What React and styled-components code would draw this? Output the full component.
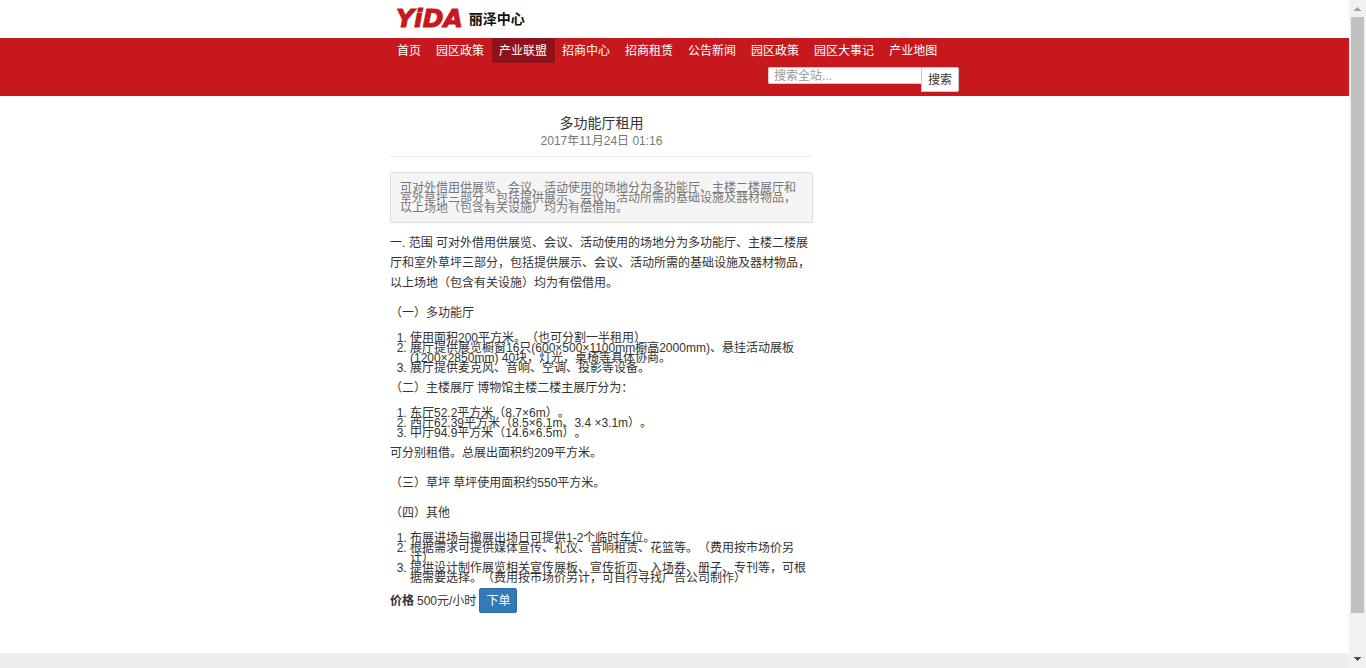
import React from "react";
import styled, { createGlobalStyle } from "styled-components";

const GlobalStyle = createGlobalStyle`
  *, *::before, *::after { box-sizing: border-box; }
  body {
    margin: 0;
    background: #fff;
    color: #333;
    font: 12px/20px "Liberation Sans", "Noto Sans CJK SC", sans-serif;
    text-spacing-trim: space-all;
  }
`;

const Window = styled.div`
  display: grid;
  grid-template-columns: minmax(0, 1fr) 17px;
  min-height: 100vh;
`;

const Page = styled.div`
  display: flex;
  flex-direction: column;
`;

const Container = styled.div`
  width: 100%;
  max-width: 569px;
  margin: 0 auto;
`;

const Brand = styled.a`
  display: flex;
  align-items: center;
  gap: 6px;
  height: 38px;
  padding-left: 6px;
  color: #111;
  text-decoration: none;
`;

const BrandMark = styled.span`
  color: #c7181e;
  font: italic bold 25px/38px "DejaVu Sans", sans-serif;
  -webkit-text-stroke: 1px #c7181e;
`;

const BrandName = styled.span`
  font-size: 14px;
  font-weight: 700;
`;

const Navbar = styled.header`
  background: #c7181e;
`;

const NavList = styled.nav`
  display: flex;
  flex-wrap: wrap;
`;

const NavLink = styled.a`
  padding: 2px 8px 0 7px;
  color: #fff;
  line-height: 23px;
  text-decoration: none;
  white-space: nowrap;
  background: ${(p) => (p.$active ? "#90111a" : "transparent")};
`;

const SearchForm = styled.form`
  display: flex;
  justify-content: flex-end;
  align-items: flex-start;
  padding: 4px 0;
`;

const SearchInput = styled.input`
  width: 153px;
  height: 17px;
  padding: 0 5px;
  border: 1px solid #ccc;
  border-right: 0;
  border-radius: 2px 0 0 2px;
  background: #fff;
  color: #555;
  font: inherit;
  line-height: 15px;
  &::placeholder { color: #999; opacity: 1; }
`;

const Button = styled.button`
  height: 25px;
  padding: 0 6px;
  border: 1px solid ${(p) => (p.$primary ? "#2e6da4" : "#ccc")};
  border-radius: ${(p) => (p.$primary ? "2px" : "0 2px 2px 0")};
  background: ${(p) => (p.$primary ? "#337ab7" : "#fff")};
  color: ${(p) => (p.$primary ? "#fff" : "#333")};
  font: inherit;
  cursor: pointer;
`;

const Article = styled.article`
  max-width: 423px;
  padding: 17px 0 40px;
`;

const ArticleHead = styled.div`
  padding-bottom: 7px;
  margin-bottom: 15px;
  border-bottom: 1px solid #eee;
  text-align: center;
`;

const Title = styled.h1`
  margin: 0;
  font-size: 14px;
  font-weight: 400;
  line-height: 20px;
`;

const PublishedAt = styled.time`
  display: block;
  color: #777;
  line-height: 16px;
`;

const Summary = styled.p`
  margin: 0 0 10px;
  padding: 10px 9px 9px;
  border: 1px solid #ddd;
  border-radius: 2px;
  background: #f5f5f5;
  color: #777;
  line-height: 10px;
`;

const Paragraph = styled.p`
  margin: 0 0 10px;
`;

const NumberedList = styled.ol`
  margin: 0 0 5px;
  padding-left: 20px;
  line-height: 10px;
`;

const PriceRow = styled.div`
  display: flex;
  align-items: center;
  gap: 3px;
`;

const Footer = styled.footer`
  height: 15px;
  margin-top: auto;
  background: #eee;
`;

const ScrollTrack = styled.div`
  display: grid;
  grid-template-rows: 17px 1fr 17px;
  justify-items: center;
  background: #f1f1f1;
`;

const ScrollThumb = styled.div`
  width: 13px;
  height: 94%;
  background: #c1c1c1;
`;

const NAV = ["首页", "园区政策", "产业联盟", "招商中心", "招商租赁", "公告新闻", "园区政策", "园区大事记", "产业地图"];

const HALL = [
  "使用面积200平方米。（也可分割一半租用）",
  "展厅提供展览橱窗16只(600×500×1100mm橱高2000mm)、悬挂活动展板(1200×2850mm) 40块，灯光，桌椅等具体协商。",
  "展厅提供麦克风、音响、空调、投影等设备。",
];

const MUSEUM = [
  "东厅52.2平方米（8.7×6m）。",
  "西厅62.39平方米（8.5×6.1m、3.4 ×3.1m）。",
  "中厅94.9平方米（14.6×6.5m）。",
];

const OTHERS = [
  "布展进场与撤展出场日可提供1-2个临时车位。",
  "根据需求可提供媒体宣传、礼仪、音响租赁、花篮等。（费用按市场价另计）",
  "提供设计制作展览相关宣传展板、宣传折页、入场券、册子、专刊等，可根据需要选择。（费用按市场价另计，可自行寻找广告公司制作）",
];

function Items({ items }) {
  return (
    <NumberedList>
      {items.map((item) => (
        <li key={item}>{item}</li>
      ))}
    </NumberedList>
  );
}

function Arrow({ down }) {
  return (
    <svg width="17" height="17" viewBox="0 0 17 17" shapeRendering="crispEdges">
      <path d={down ? "M5 6h7v1h-1v1h-1v1h-1v1h-1v-1h-1v-1h-1v-1h-1z" : "M5 11h7v-1h-1v-1h-1v-1h-1v-1h-1v1h-1v1h-1v1h-1z"} fill={down ? "#505050" : "#a3a3a3"} />
    </svg>
  );
}

export default function App() {
  return (
    <>
      <GlobalStyle />
      <Window>
        <Page>
          <Container>
            <Brand href="#">
              <BrandMark>YiDA</BrandMark>
              <BrandName>丽泽中心</BrandName>
            </Brand>
          </Container>
          <Navbar>
            <Container>
              <NavList>
                {NAV.map((label, i) => (
                  <NavLink key={i} href="#" $active={i === 2}>{label}</NavLink>
                ))}
              </NavList>
              <SearchForm role="search" onSubmit={(e) => e.preventDefault()}>
                <SearchInput type="text" aria-label="搜索全站" placeholder="搜索全站..." />
                <Button type="submit">搜索</Button>
              </SearchForm>
            </Container>
          </Navbar>
          <Container as="main">
            <Article>
              <ArticleHead>
                <Title>多功能厅租用</Title>
                <PublishedAt dateTime="2017-11-24T01:16">2017年11月24日 01:16</PublishedAt>
              </ArticleHead>
              <Summary>
                可对外借用供展览、会议、活动使用的场地分为多功能厅、主楼二楼展厅和室外草坪三部分，包括提供展示、会议、活动所需的基础设施及器材物品，以上场地（包含有关设施）均为有偿借用。
              </Summary>
              <Paragraph>
                一. 范围 可对外借用供展览、会议、活动使用的场地分为多功能厅、主楼二楼展厅和室外草坪三部分，包括提供展示、会议、活动所需的基础设施及器材物品，以上场地（包含有关设施）均为有偿借用。
              </Paragraph>
              <Paragraph>（一）多功能厅</Paragraph>
              <Items items={HALL} />
              <Paragraph>（二）主楼展厅 博物馆主楼二楼主展厅分为：</Paragraph>
              <Items items={MUSEUM} />
              <Paragraph>可分别租借。总展出面积约209平方米。</Paragraph>
              <Paragraph>（三）草坪 草坪使用面积约550平方米。</Paragraph>
              <Paragraph>（四）其他</Paragraph>
              <Items items={OTHERS} />
              <PriceRow>
                <strong>价格</strong>
                <span>500元/小时</span>
                <Button type="button" $primary>下单</Button>
              </PriceRow>
            </Article>
          </Container>
          <Footer />
        </Page>
        <ScrollTrack aria-hidden="true">
          <Arrow />
          <ScrollThumb />
          <Arrow down />
        </ScrollTrack>
      </Window>
    </>
  );
}
